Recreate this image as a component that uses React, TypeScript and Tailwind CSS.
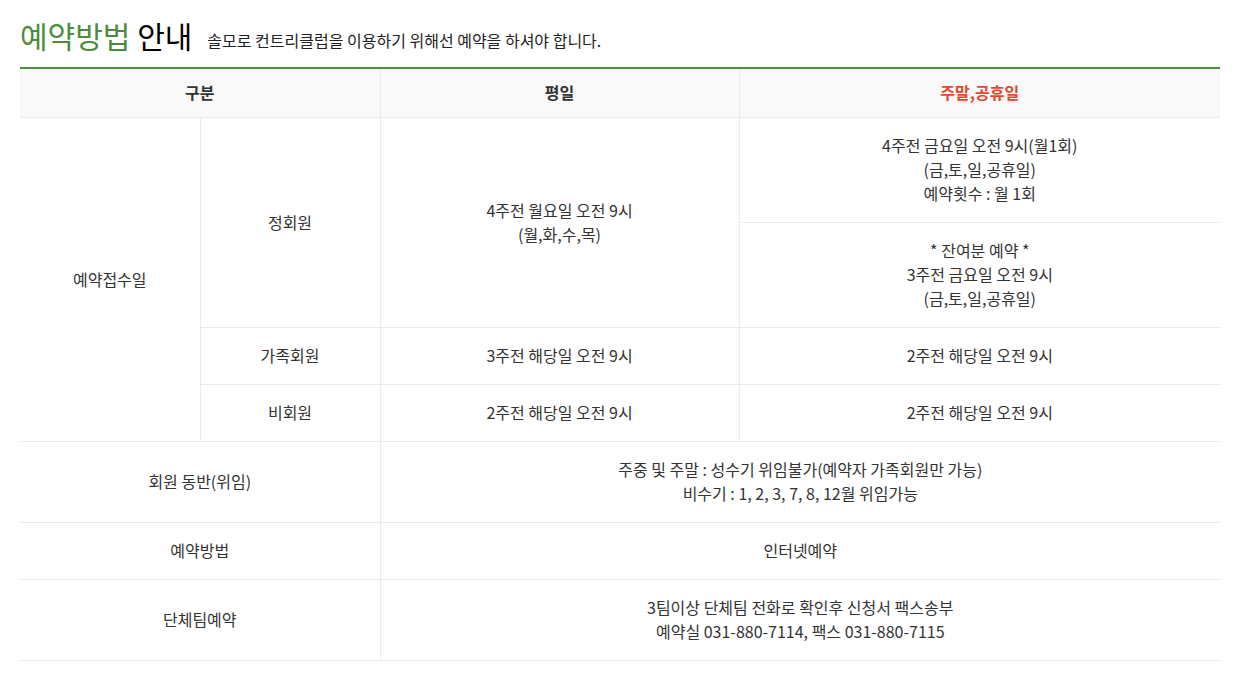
import React from "react";

const cell = "border border-[#ebebeb] text-center align-middle pt-[15px] pb-[17px] px-2.5 leading-6";

export default function App() {
  return (
    <div className="min-h-screen bg-white px-5 pt-[13px] text-[16px] text-[#333] font-['Noto_Sans_CJK_KR','Noto_Sans',sans-serif]">
      <div className="flex items-end gap-[15px] h-[42px]">
        <h2 className="text-[30px] leading-[40px] font-normal text-black">
          <span className="text-[#4b8d3d]">예약방법</span> 안내
        </h2>
        <p className="text-[16px] leading-[24px] pb-[3px] text-[#222]">솔모로 컨트리클럽을 이용하기 위해선 예약을 하셔야 합니다.</p>
      </div>
      <table className="mt-[12px] w-[1200px] border-collapse border-t-2 border-t-[#4b8d3d] table-fixed">
        <colgroup>
          <col className="w-[180px]" />
          <col className="w-[180px]" />
          <col className="w-[359px]" />
          <col className="w-[481px]" />
        </colgroup>
        <thead>
          <tr className="bg-[#f8f9f8]">
            <th colSpan={2} className="border-x border-b border-[#ebebeb] border-l-0 pt-[11px] pb-[13px] font-bold leading-6 text-[#333]">구분</th>
            <th className="border-x border-b border-[#ebebeb] pt-[11px] pb-[13px] font-bold leading-6 text-[#333]">평일</th>
            <th className="border-b border-[#ebebeb] pt-[11px] pb-[13px] font-bold leading-6 text-[#e5472b]">주말,공휴일</th>
          </tr>
        </thead>
        <tbody>
          <tr>
            <td rowSpan={4} className={cell + " border-l-0"}>예약접수일</td>
            <td rowSpan={2} className={cell}>정회원</td>
            <td rowSpan={2} className={cell}>4주전 월요일 오전 9시<br />(월,화,수,목)</td>
            <td className={cell + " border-r-0"}>4주전 금요일 오전 9시(월1회)<br />(금,토,일,공휴일)<br />예약횟수 : 월 1회</td>
          </tr>
          <tr>
            <td className={cell + " border-r-0"}>* 잔여분 예약 *<br />3주전 금요일 오전 9시<br />(금,토,일,공휴일)</td>
          </tr>
          <tr>
            <td className={cell}>가족회원</td>
            <td className={cell}>3주전 해당일 오전 9시</td>
            <td className={cell + " border-r-0"}>2주전 해당일 오전 9시</td>
          </tr>
          <tr>
            <td className={cell}>비회원</td>
            <td className={cell}>2주전 해당일 오전 9시</td>
            <td className={cell + " border-r-0"}>2주전 해당일 오전 9시</td>
          </tr>
          <tr>
            <td colSpan={2} className={cell + " border-l-0"}>회원 동반(위임)</td>
            <td colSpan={2} className={cell + " border-r-0"}>주중 및 주말 : 성수기 위임불가(예약자 가족회원만 가능)<br />비수기 : 1, 2, 3, 7, 8, 12월 위임가능</td>
          </tr>
          <tr>
            <td colSpan={2} className={cell + " border-l-0"}>예약방법</td>
            <td colSpan={2} className={cell + " border-r-0"}>인터넷예약</td>
          </tr>
          <tr>
            <td colSpan={2} className={cell + " border-l-0"}>단체팀예약</td>
            <td colSpan={2} className={cell + " border-r-0"}>3팀이상 단체팀 전화로 확인후 신청서 팩스송부<br />예약실 031-880-7114, 팩스 031-880-7115</td>
          </tr>
        </tbody>
      </table>
    </div>
  );
}
